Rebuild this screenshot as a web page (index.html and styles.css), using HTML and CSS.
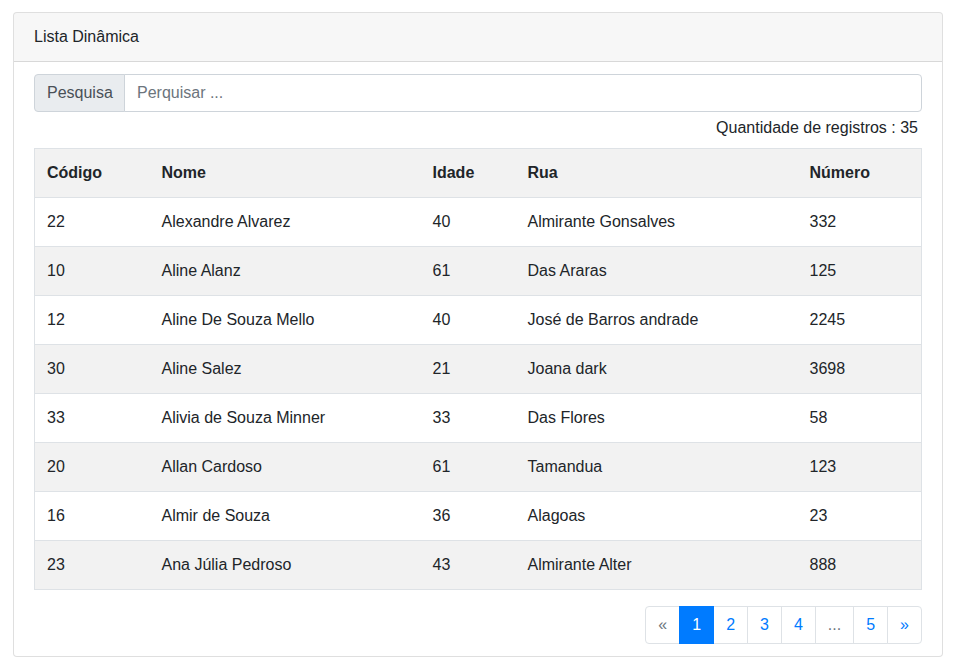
FILE: index.html
```html
<!DOCTYPE html>
<html lang="pt">
<head>
<meta charset="utf-8">
<title>Lista Dinâmica</title>
<link rel="stylesheet" href="styles.css">
</head>
<body>
<div class="card">
  <div class="card-header">Lista Dinâmica</div>
  <div class="card-body">
    <div class="input-group">
      <span class="input-group-text">Pesquisa</span>
      <input class="form-control" type="text" placeholder="Perquisar ...">
    </div>
    <p class="count">Quantidade de registros : 35</p>
    <table class="table">
      <colgroup>
        <col class="c1"><col class="c2"><col class="c3"><col class="c4"><col class="c5">
      </colgroup>
      <thead>
        <tr><th>Código</th><th>Nome</th><th>Idade</th><th>Rua</th><th>Número</th></tr>
      </thead>
      <tbody>
        <tr><td>22</td><td>Alexandre Alvarez</td><td>40</td><td>Almirante Gonsalves</td><td>332</td></tr>
        <tr><td>10</td><td>Aline Alanz</td><td>61</td><td>Das Araras</td><td>125</td></tr>
        <tr><td>12</td><td>Aline De Souza Mello</td><td>40</td><td>José de Barros andrade</td><td>2245</td></tr>
        <tr><td>30</td><td>Aline Salez</td><td>21</td><td>Joana dark</td><td>3698</td></tr>
        <tr><td>33</td><td>Alivia de Souza Minner</td><td>33</td><td>Das Flores</td><td>58</td></tr>
        <tr><td>20</td><td>Allan Cardoso</td><td>61</td><td>Tamandua</td><td>123</td></tr>
        <tr><td>16</td><td>Almir de Souza</td><td>36</td><td>Alagoas</td><td>23</td></tr>
        <tr><td>23</td><td>Ana Júlia Pedroso</td><td>43</td><td>Almirante Alter</td><td>888</td></tr>
      </tbody>
    </table>
    <nav class="pager">
      <ul class="pagination">
        <li class="page-item disabled"><span class="page-link">«</span></li>
        <li class="page-item active"><span class="page-link">1</span></li>
        <li class="page-item"><a class="page-link" href="#">2</a></li>
        <li class="page-item"><a class="page-link" href="#">3</a></li>
        <li class="page-item"><a class="page-link" href="#">4</a></li>
        <li class="page-item disabled"><span class="page-link">...</span></li>
        <li class="page-item"><a class="page-link" href="#">5</a></li>
        <li class="page-item"><a class="page-link" href="#">»</a></li>
      </ul>
    </nav>
  </div>
</div>
</body>
</html>
```
FILE: styles.css
```css
* { box-sizing: border-box; }
html, body { margin: 0; padding: 0; background: #fff; }
body {
  font-family: "Liberation Sans", Arial, sans-serif;
  font-size: 16px;
  line-height: 24px;
  color: #212529;
  padding: 12px 12px 0 13px;
}
.card {
  width: 930px;
  border: 1px solid rgba(0,0,0,.125);
  border-radius: 4px;
  background: #fff;
}
.card-header {
  padding: 12px 20px;
  background: rgba(0,0,0,.03);
  border-bottom: 1px solid rgba(0,0,0,.125);
  border-radius: 3px 3px 0 0;
}
.card-body {
  padding: 12px 20px 12px 20px;
}
.input-group {
  display: flex;
  height: 38px;
}
.input-group-text {
  display: flex;
  align-items: center;
  padding: 6px 12px;
  background: #e9ecef;
  border: 1px solid #ced4da;
  border-radius: 4px 0 0 4px;
  color: #495057;
  width: 91px;
}
.form-control {
  flex: 1;
  min-width: 0;
  height: 38px;
  margin: 0 0 0 -1px;
  padding: 6px 12px;
  font: inherit;
  color: #495057;
  border: 1px solid #ced4da;
  border-radius: 0 4px 4px 0;
  outline: none;
}
.form-control::placeholder { color: #6c757d; opacity: 1; }
.count {
  margin: 4px 4px 8px 0;
  text-align: right;
}
.table {
  width: 100%;
  border-collapse: collapse;
  border: 1px solid #dee2e6;
  table-layout: fixed;
}
.c1 { width: 115px; }
.c2 { width: 271px; }
.c3 { width: 95px; }
.c4 { width: 282px; }
.c5 { width: auto; }
.table th, .table td {
  padding: 12px;
  text-align: left;
  vertical-align: top;
  border-top: 1px solid #dee2e6;
  white-space: nowrap;
}
.table thead th {
  font-weight: bold;
  background: #f2f2f2;
  border-bottom: 1px solid #dee2e6;
}
.table tbody tr:nth-child(even) { background: #f2f2f2; }
.pager {
  display: flex;
  justify-content: flex-end;
  margin-top: 16px;
}
.pagination {
  display: flex;
  list-style: none;
  margin: 0;
  padding: 0;
}
.page-link {
  display: block;
  padding: 6px 12px;
  line-height: 24px;
  color: #007bff;
  text-decoration: none;
  background: #fff;
  border: 1px solid #dee2e6;
  margin-left: -1px;
}
.page-item:first-child .page-link {
  margin-left: 0;
  border-radius: 4px 0 0 4px;
}
.page-item:last-child .page-link { border-radius: 0 4px 4px 0; }
.page-item.disabled .page-link { color: #6c757d; }
.page-item.active .page-link {
  color: #fff;
  background: #007bff;
  border-color: #007bff;
  position: relative;
  z-index: 1;
}
```
